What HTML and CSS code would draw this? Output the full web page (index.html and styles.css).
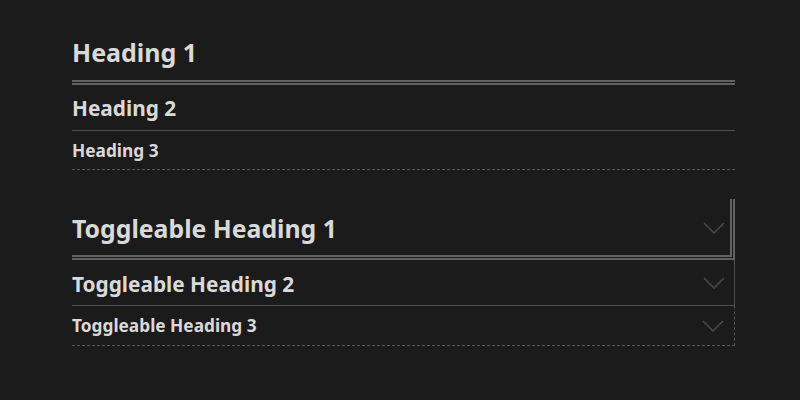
FILE: index.html
```html
<!DOCTYPE html>
<html lang="en">

<head>
  <meta charset="UTF-8">
  <title>Headings</title>
  <link rel="stylesheet" href="styles.css">
</head>

<body>
  <div class="doc">
    <h1 class="heading h1">Heading 1</h1>
    <h2 class="heading h2">Heading 2</h2>
    <h3 class="heading h3">Heading 3</h3>

    <div class="toggles">
      <div class="toggle t1">
        <span>Toggleable Heading 1</span>
        <svg class="chevron" width="22" height="12" viewBox="0 0 22 12"><polyline points="1,1 11,11 21,1" /></svg>
      </div>
      <div class="toggle t2">
        <span>Toggleable Heading 2</span>
        <svg class="chevron" width="22" height="12" viewBox="0 0 22 12"><polyline points="1,1 11,11 21,1" /></svg>
      </div>
      <div class="toggle t3">
        <span>Toggleable Heading 3</span>
        <svg class="chevron" width="22" height="12" viewBox="0 0 22 12"><polyline points="1,1 11,11 21,1" /></svg>
      </div>
    </div>
  </div>
</body>

</html>
```

FILE: styles.css
```css
* {
  margin: 0;
  padding: 0;
  box-sizing: border-box;
}

body {
  font-family: 'Noto Sans', 'Open Sans', sans-serif;
  background: #1b1b1b;
  color: #d9d9d9;
  height: 100vh;
  overflow: hidden;
}

.doc {
  width: 663px;
  margin-left: 72px;
  padding-top: 37px;
}

.heading {
  font-weight: 700;
}

.h1 {
  font-size: 25px;
  line-height: 31px;
  padding-bottom: 12px;
  border-bottom: 5px double #626262;
}

.h2 {
  font-size: 20.8px;
  line-height: 25px;
  padding: 11px 0 9px;
  border-bottom: 1px solid #4f4f4f;
}

.h3 {
  font-size: 17.3px;
  line-height: 21px;
  padding: 9px 0 8px;
  border-bottom: 1px dashed #555;
}

.toggles {
  margin-top: 29px;
}

.toggle {
  display: flex;
  align-items: center;
  justify-content: space-between;
  font-weight: 700;
}

.toggle .chevron {
  flex-shrink: 0;
}

.t1 {
  font-size: 24.8px;
  line-height: 29px;
  padding: 15px 5px 12px 0;
  border-right: 5px double #626262;
  border-bottom: 5px double #626262;
}

.t1 .chevron {
  margin-top: -2px;
}

.t2 {
  font-size: 20.8px;
  line-height: 25px;
  padding: 12px 9px 8px 0;
  border-right: 1px solid #4f4f4f;
  border-bottom: 1px solid #4f4f4f;
}

.t2 .chevron {
  margin-top: -4px;
}

.t3 {
  font-size: 17.3px;
  line-height: 21px;
  padding: 9px 10px 9px 0;
  border-right: 1px dashed #555;
  border-bottom: 1px dashed #555;
}

.chevron polyline {
  fill: none;
  stroke: #4a4a4a;
  stroke-width: 1.5;
}
```
